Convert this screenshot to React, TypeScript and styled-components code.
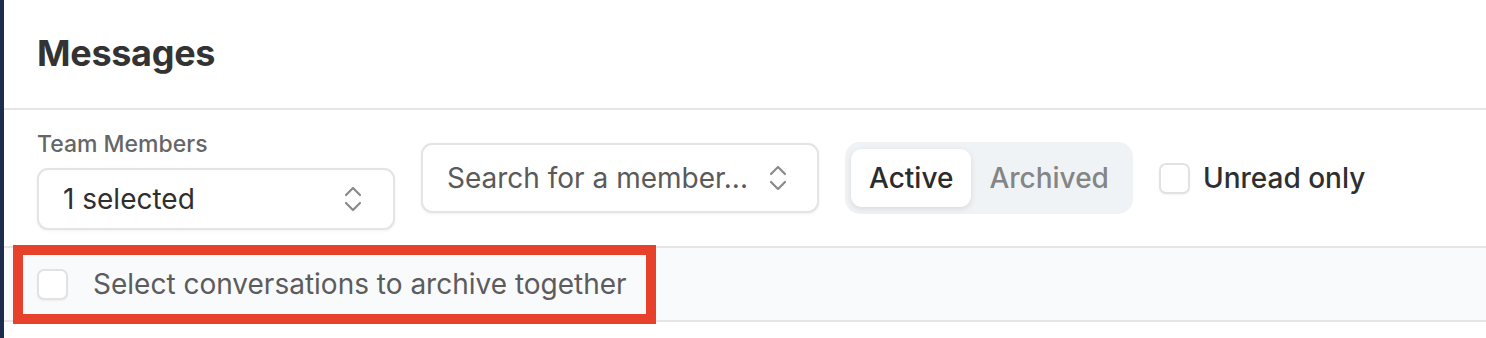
import React from "react";
import styled, { createGlobalStyle } from "styled-components";

const Global = createGlobalStyle`
  html, body { margin: 0; padding: 0; background: #ffffff; }
  body { font-family: Inter, "Noto Sans", "Liberation Sans", sans-serif; -webkit-font-smoothing: antialiased; }
  * { box-sizing: border-box; }
`;

const Page = styled.div`
  display: flex;
  min-height: 338px;
  width: 1486px;
  overflow: hidden;
`;

const SideStrip = styled.div`
  width: 4px;
  flex: none;
  background: #1c2c4c;
`;

const Main = styled.div`
  flex: 1;
  display: flex;
  flex-direction: column;
`;

const Header = styled.header`
  height: 110px;
  display: flex;
  align-items: center;
  padding: 0 0 2px 33px;
  border-bottom: 2px solid #e6e6e6;
`;

const Title = styled.h1`
  margin: 0;
  font-size: 36px;
  font-weight: 700;
  color: #333333;
  letter-spacing: -0.3px;
`;

const Filters = styled.div`
  height: 138px;
  display: flex;
  align-items: center;
  gap: 26px;
  padding: 0 0 0 33px;
  border-bottom: 2px solid #e6e6e6;
`;

const Field = styled.div`
  display: flex;
  flex-direction: column;
  gap: 9px;
  margin-top: 2px;
`;

const FieldLabel = styled.label`
  font-size: 23px;
  line-height: 30px;
  font-weight: 500;
  color: #666666;
`;

const SelectBox = styled.div<{ $w: number; $h: number; $pad: number }>`
  width: ${(p) => p.$w}px;
  height: ${(p) => p.$h}px;
  display: flex;
  align-items: center;
  justify-content: space-between;
  padding: 0 ${(p) => p.$pad}px 0 24px;
  border: 2px solid #e4e4e4;
  border-radius: 11px;
  background: #ffffff;
  box-shadow: 0 1px 3px rgba(0, 0, 0, 0.06);
`;

const SelectText = styled.span<{ $muted?: boolean }>`
  font-size: 28px;
  font-weight: 400;
  color: ${(p) => (p.$muted ? "#5a5a5a" : "#2f2f2f")};
  white-space: nowrap;
`;

const Chevrons = () => (
  <svg width="18" height="26" viewBox="0 0 18 26" fill="none" stroke="#8a8a8a" strokeWidth="2.2" strokeLinecap="round" strokeLinejoin="round">
    <path d="M2 9 L9 2 L16 9" />
    <path d="M2 17 L9 24 L16 17" />
  </svg>
);

const Segmented = styled.div`
  display: flex;
  align-items: stretch;
  height: 72px;
  padding: 7px 6px;
  background: #eff3f6;
  border-radius: 15px;
`;

const SegButton = styled.button<{ $active?: boolean }>`
  font-family: inherit;
  font-size: 28px;
  font-weight: 500;
  border: none;
  padding: 0 18px;
  border-radius: 11px;
  cursor: pointer;
  color: ${(p) => (p.$active ? "#2b2b2b" : "#858585")};
  background: ${(p) => (p.$active ? "#ffffff" : "transparent")};
  box-shadow: ${(p) => (p.$active ? "0 2px 6px rgba(0,0,0,0.10)" : "none")};
`;

const CheckRow = styled.label<{ $gap: number }>`
  display: flex;
  align-items: center;
  gap: ${(p) => p.$gap}px;
`;

const CheckBox = styled.span`
  width: 31px;
  height: 31px;
  border: 2px solid #e2e2e2;
  border-radius: 7px;
  background: #ffffff;
  box-shadow: 0 1px 2px rgba(0, 0, 0, 0.05);
  flex: none;
`;

const CheckText = styled.span<{ $muted?: boolean }>`
  font-size: 28px;
  font-weight: ${(p) => (p.$muted ? 400 : 500)};
  color: ${(p) => (p.$muted ? "#5c5c5c" : "#2f2f2f")};
  white-space: nowrap;
`;

const BulkBar = styled.div`
  position: relative;
  height: 74px;
  display: flex;
  align-items: center;
  padding: 0 0 0 33px;
  background: #f9fafb;
  border-bottom: 2px solid #e6e6e6;
`;

const Highlight = styled.div`
  position: absolute;
  left: 9px;
  top: -3px;
  width: 643px;
  height: 79px;
  border: 10px solid #e8412b;
  pointer-events: none;
`;

export default function App() {
  return (
    <Page>
      <Global />
      <SideStrip />
      <Main>
        <Header>
          <Title>Messages</Title>
        </Header>
        <Filters>
          <Field>
            <FieldLabel>Team Members</FieldLabel>
            <SelectBox $w={358} $h={62} $pad={31}>
              <SelectText>1 selected</SelectText>
              <Chevrons />
            </SelectBox>
          </Field>
          <SelectBox $w={398} $h={70} $pad={30}>
            <SelectText $muted>Search for a member...</SelectText>
            <Chevrons />
          </SelectBox>
          <Segmented>
            <SegButton $active>Active</SegButton>
            <SegButton>Archived</SegButton>
          </Segmented>
          <CheckRow $gap={13}>
            <CheckBox />
            <CheckText>Unread only</CheckText>
          </CheckRow>
        </Filters>
        <BulkBar>
          <CheckRow $gap={25}>
            <CheckBox />
            <CheckText $muted>Select conversations to archive together</CheckText>
          </CheckRow>
          <Highlight />
        </BulkBar>
      </Main>
    </Page>
  );
}
